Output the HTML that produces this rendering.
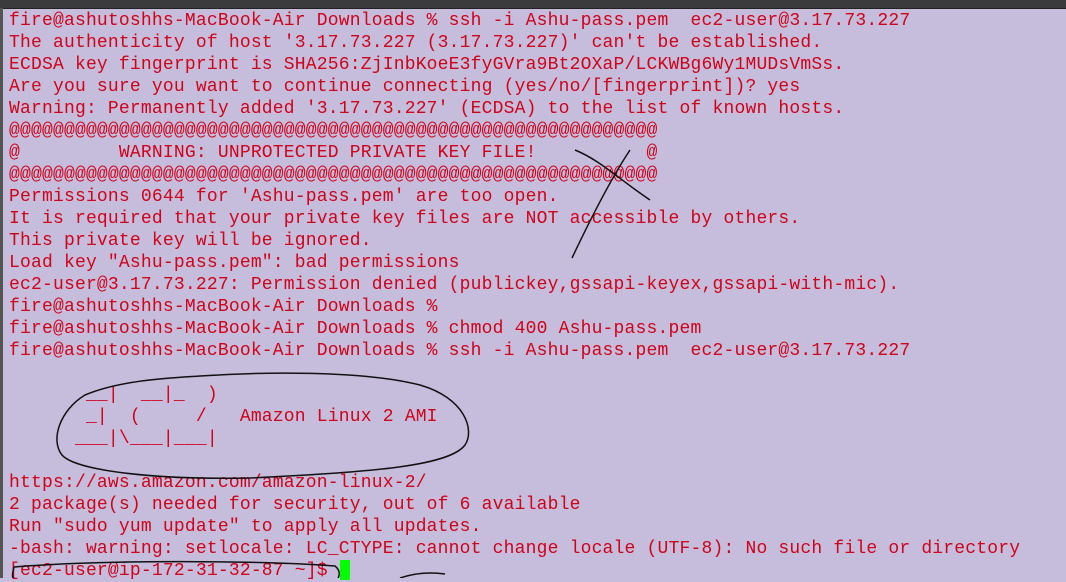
<!DOCTYPE html>
<html><head><style>
html,body{margin:0;padding:0;}
body{width:1066px;height:578px;overflow:hidden;background:#c5bddb;position:relative;}
.top{position:absolute;left:0;top:0;width:1066px;height:8px;background:#3b3b3d;border-bottom:1px solid #222;}
.left{position:absolute;left:0;top:8px;width:3px;height:570px;background:#555;}
pre{position:absolute;left:9px;top:10px;margin:0;font-family:"Liberation Mono",monospace;font-size:18px;letter-spacing:0.19px;line-height:22px;color:#d0021b;white-space:pre;}
.cur{position:absolute;left:340px;top:560px;width:10px;height:20px;background:#00ff00;}
svg{position:absolute;left:0;top:0;}
</style></head><body>
<div class="top"></div><div class="left"></div>
<pre>fire@ashutoshhs-MacBook-Air Downloads % ssh -i Ashu-pass.pem  ec2-user@3.17.73.227
The authenticity of host '3.17.73.227 (3.17.73.227)' can't be established.
ECDSA key fingerprint is SHA256:ZjInbKoeE3fyGVra9Bt2OXaP/LCKWBg6Wy1MUDsVmSs.
Are you sure you want to continue connecting (yes/no/[fingerprint])? yes
Warning: Permanently added '3.17.73.227' (ECDSA) to the list of known hosts.
@@@@@@@@@@@@@@@@@@@@@@@@@@@@@@@@@@@@@@@@@@@@@@@@@@@@@@@@@@@
@         WARNING: UNPROTECTED PRIVATE KEY FILE!          @
@@@@@@@@@@@@@@@@@@@@@@@@@@@@@@@@@@@@@@@@@@@@@@@@@@@@@@@@@@@
Permissions 0644 for 'Ashu-pass.pem' are too open.
It is required that your private key files are NOT accessible by others.
This private key will be ignored.
Load key "Ashu-pass.pem": bad permissions
ec2-user@3.17.73.227: Permission denied (publickey,gssapi-keyex,gssapi-with-mic).
fire@ashutoshhs-MacBook-Air Downloads %
fire@ashutoshhs-MacBook-Air Downloads % chmod 400 Ashu-pass.pem
fire@ashutoshhs-MacBook-Air Downloads % ssh -i Ashu-pass.pem  ec2-user@3.17.73.227

       __|  __|_  )
       _|  (     /   Amazon Linux 2 AMI
      ___|\___|___|

https://aws.amazon.com/amazon-linux-2/
2 package(s) needed for security, out of 6 available
Run "sudo yum update" to apply all updates.
-bash: warning: setlocale: LC_CTYPE: cannot change locale (UTF-8): No such file or directory
[ec2-user@ip-172-31-32-87 ~]$</pre>
<div class="cur"></div>
<svg width="1066" height="578" fill="none" stroke="#111" stroke-width="1.5">
<path d="M200 376 C260 372 360 370 420 385 C465 398 475 430 465 445 C450 465 380 472 250 478 C150 480 75 470 62 455 C50 440 60 410 85 395 C120 380 170 378 200 376"/>
<path d="M575 150 C600 160 620 180 650 200"/>
<path d="M630 150 C610 180 590 220 572 258"/>
<path d="M14 567 C12 575 12 578 14 578 M14 567 C100 560 250 560 335 566 C340 570 340 575 338 578"/>
<path d="M400 578 C415 573 430 572 445 574"/>
</svg>
</body></html>
